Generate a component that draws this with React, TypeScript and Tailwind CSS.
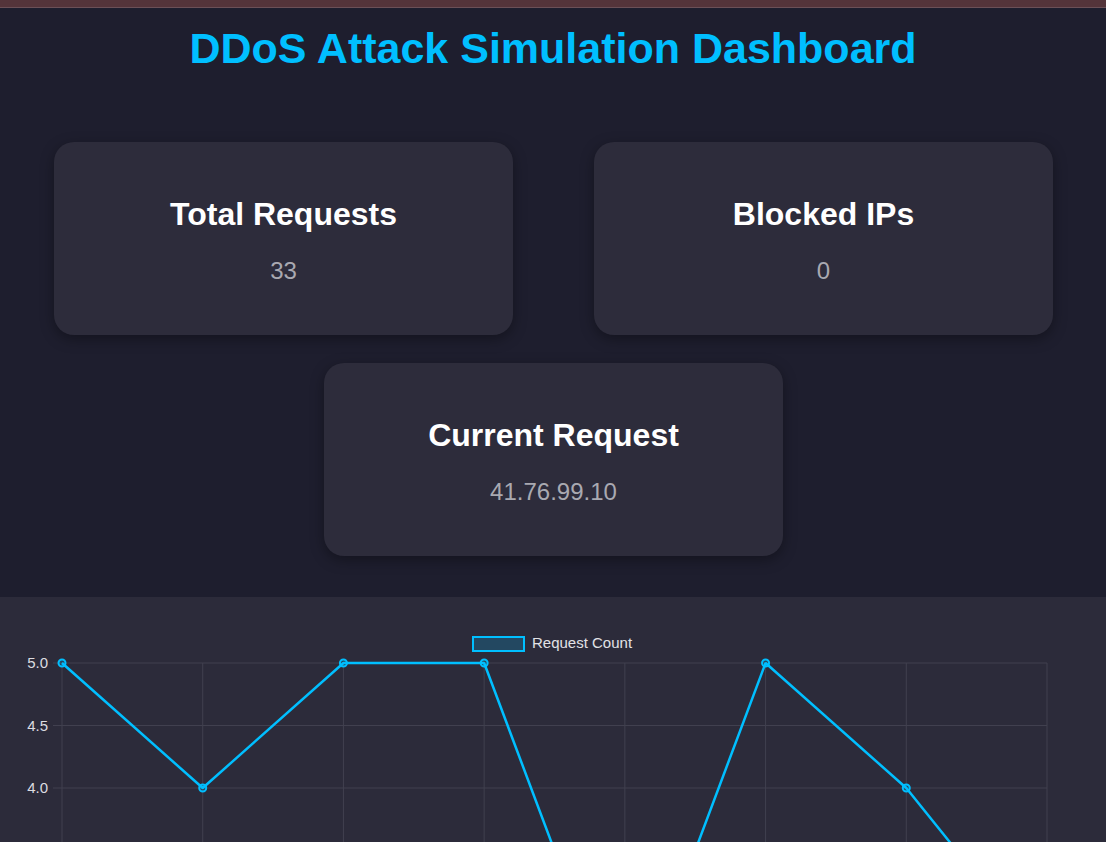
import React from "react";

const stats = [
  { title: "Total Requests", value: "33" },
  { title: "Blocked IPs", value: "0" },
  { title: "Current Request", value: "41.76.99.10" },
];

// request counts per tick, drawn like the chart.js line chart
const data = [5, 4, 5, 5, 2, 5, 4, 2.6];

function StatCard({ title, value }: { title: string; value: string }) {
  return (
    <div className="w-[459px] h-[193px] rounded-[20px] bg-[#2d2c3b] shadow-[0_4px_14px_rgba(0,0,0,0.35)] flex flex-col items-center pt-[54px]">
      <h2 className="text-[32px] leading-[37px] font-bold text-white">{title}</h2>
      <p className="mt-[24px] text-[24px] leading-[28px] text-[#a9a9b1]">{value}</p>
    </div>
  );
}

function RequestChart() {
  const left = 62;
  const right = 1047;
  const top = 66;
  const step = (right - left) / 7;
  const unit = 125; // px per 1.0
  const bottom = top + unit * 3;
  const xs = data.map((_, i) => left + i * step);
  const ys = data.map((v) => top + (5 - v) * unit);
  const pts = xs.map((x, i) => `${x},${ys[i]}`).join(" ");
  const grid = "#41404f";

  return (
    <svg width="1106" height="480" viewBox="0 0 1106 480" className="block">
      {/* legend */}
      <rect x="473" y="40" width="51" height="14" fill="rgba(0,191,255,0.2)" stroke="#00bfff" strokeWidth="2" />
      <text x="532" y="51" fontSize="15" fill="#e2e2e6" fontFamily="'Liberation Sans', Arial, sans-serif">
        Request Count
      </text>

      {/* horizontal grid */}
      {[5, 4.5, 4, 3.5, 3, 2.5, 2].map((v) => {
        const y = top + (5 - v) * unit;
        return (
          <g key={v}>
            <line x1={left - 9} x2={right} y1={y} y2={y} stroke={grid} strokeWidth="1" />
            {v >= 4 && (
              <text
                x="48"
                y={y + 5}
                textAnchor="end"
                fontSize="15"
                fill="#dcdce0"
                fontFamily="'Liberation Sans', Arial, sans-serif"
              >
                {v.toFixed(1)}
              </text>
            )}
          </g>
        );
      })}

      {/* vertical grid */}
      {xs.map((x, i) => (
        <line key={i} x1={x} x2={x} y1={top} y2={bottom + 9} stroke={grid} strokeWidth="1" />
      ))}

      <polyline points={pts} fill="none" stroke="#00bfff" strokeWidth="2.5" strokeLinejoin="bevel" />
      {xs.map((x, i) => (
        <circle key={i} cx={x} cy={ys[i]} r="3.5" fill="rgba(0,191,255,0.2)" stroke="#00bfff" strokeWidth="2" />
      ))}
    </svg>
  );
}

export default function App() {
  return (
    <div className="min-h-screen bg-[#1e1e2e] font-['Liberation_Sans',Arial,sans-serif]">
      <div className="h-[8px] bg-[#54343a] border-b border-[#6b5057]" />

      <h1 className="mt-[15px] text-center text-[43px] leading-[50px] font-bold text-[#00bfff]">
        DDoS Attack Simulation Dashboard
      </h1>

      <div className="mt-[69px] flex flex-wrap justify-center gap-x-[81px] gap-y-[28px] pl-px">
        {stats.map((s) => (
          <StatCard key={s.title} title={s.title} value={s.value} />
        ))}
      </div>

      <section className="mt-[41px] bg-[#2c2b3a]">
        <RequestChart />
      </section>
    </div>
  );
}
